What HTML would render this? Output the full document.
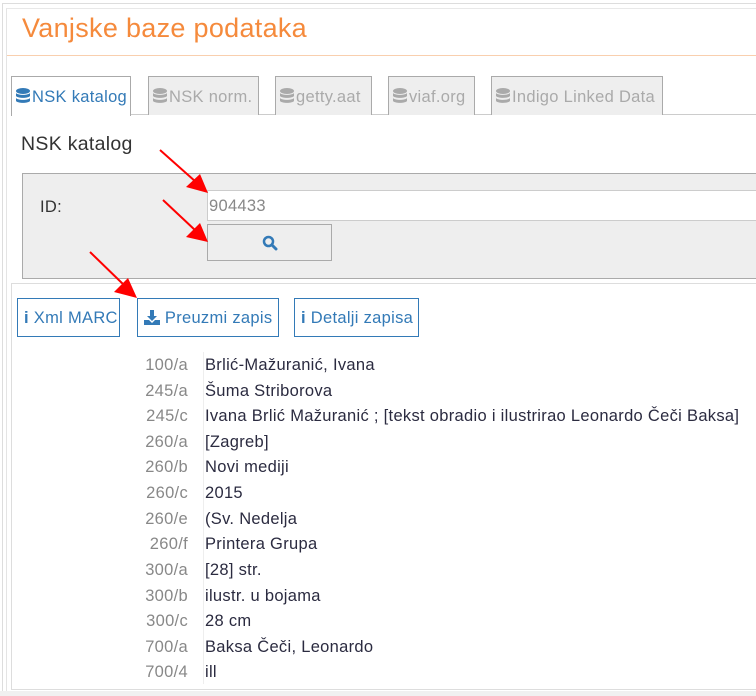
<!DOCTYPE html>
<html style="overflow:hidden;width:756px;height:696px"><head><meta charset="utf-8"><style>
*{box-sizing:border-box;margin:0;padding:0}
body{width:756px;height:696px;background:#fff;font-family:"Liberation Sans",sans-serif;position:relative;overflow:hidden;letter-spacing:.3px}
.a{position:absolute}
.tab{position:absolute;top:76px;height:39px;border:1px solid #aaa;border-bottom:none;background:#eee;color:#aaa;font-size:16.5px;line-height:40px;padding-left:4px;white-space:nowrap}
.tab svg{vertical-align:-2px;margin-right:1px}
.tab.act{background:#fff;color:#337ab7;height:40px}
.btn{position:absolute;top:298px;height:39px;border:1px solid #337ab7;color:#337ab7;font-size:16.5px;line-height:39px;padding-left:6px;white-space:nowrap}
.row{position:absolute;left:130px;height:25px;font-size:16.5px;line-height:25px;white-space:nowrap}
.row .l{display:inline-block;width:58px;text-align:right;color:#888}
.row .v{position:absolute;left:75px;color:#2b2b40}
</style></head><body>
<div class="a" style="left:2px;top:3px;width:754px;height:693px;border-left:1px solid #ddd;border-top:1px solid #ddd"></div>
<div class="a" style="left:6px;top:8px;width:750px;height:688px;border-left:1px solid #e4e4e4;border-top:1px solid #e8e8e8"></div>
<div class="a" style="left:22px;top:13px;font-size:27px;color:#f58a3c">Vanjske baze podataka</div>
<div class="a" style="left:7px;top:55px;width:749px;height:1px;background:#f9cfae"></div>
<div class="a" style="left:11px;top:114px;width:745px;height:1px;background:#ccc"></div>
<svg width="0" height="0" style="position:absolute"><defs><g id="db"><ellipse cx="7" cy="3" rx="7" ry="3"/><path d="M0 5c2 2.5 12 2.5 14 0v3c-2 2.5-12 2.5-14 0z"/><path d="M0 10c2 2.5 12 2.5 14 0v3c-2 2.5-12 2.5-14 0z"/></g></defs></svg>
<div class="tab act" style="left:11px;width:120px"><svg width="15" height="16" fill="#337ab7"><use href="#db"/></svg>NSK katalog</div>
<div class="tab" style="left:148px;width:111px"><svg width="15" height="16" fill="#aaa"><use href="#db"/></svg>NSK norm.</div>
<div class="tab" style="left:275px;width:97px"><svg width="15" height="16" fill="#aaa"><use href="#db"/></svg>getty.aat</div>
<div class="tab" style="left:388px;width:87px"><svg width="15" height="16" fill="#aaa"><use href="#db"/></svg>viaf.org</div>
<div class="tab" style="left:491px;width:172px"><svg width="15" height="16" fill="#aaa"><use href="#db"/></svg>Indigo Linked Data</div>
<div class="a" style="left:21px;top:133px;font-size:19.5px;color:#333">NSK katalog</div>
<div class="a" style="left:22px;top:173px;width:740px;height:106px;background:#eee;border:1px solid #aaa"></div>
<div class="a" style="left:40px;top:198px;font-size:16.5px;color:#333">ID:</div>
<div class="a" style="left:207px;top:190px;width:560px;height:31px;background:#fff;border:1px solid #ccc;font-size:16.5px;color:#888;line-height:31px;padding-left:1px">904433</div>
<div class="a" style="left:207px;top:224px;width:125px;height:37px;border:1px solid #aaa;background:#eee"><svg class="a" style="left:54px;top:10px" width="16" height="16" viewBox="0 0 16 16"><circle cx="6.5" cy="6.5" r="4.5" fill="none" stroke="#337ab7" stroke-width="2.5"/><path d="M10 10l4 4" stroke="#337ab7" stroke-width="3" stroke-linecap="round"/></svg></div>
<div class="a" style="left:11px;top:283px;width:760px;height:407px;border:1px solid #ddd"></div>
<div class="a" style="left:0;top:691px;width:756px;height:5px;background:#f0f0f0"></div>
<div class="btn" style="left:17px;width:103px"><b>i</b> Xml MARC</div>
<div class="btn" style="left:137px;width:142px"><svg width="16" height="15" viewBox="0 0 16 15" style="vertical-align:-2px"><path d="M6 0h4v6h3l-5 5-5-5h3z" fill="#337ab7"/><path d="M0 10h5l3 3 3-3h5v5H0z" fill="#337ab7"/></svg> Preuzmi zapis</div>
<div class="btn" style="left:294px;width:125px"><b>i</b> Detalji zapisa</div>
<div class="a" style="left:203px;top:352px;width:1px;height:332px;background:#eee"></div>
<div class="row" style="top:353px"><span class="l">100/a</span><span class="v">Brlić-Mažuranić, Ivana</span></div>
<div class="row" style="top:379px"><span class="l">245/a</span><span class="v">Šuma Striborova</span></div>
<div class="row" style="top:404px"><span class="l">245/c</span><span class="v">Ivana Brlić Mažuranić ; [tekst obradio i ilustrirao Leonardo Čeči Baksa]</span></div>
<div class="row" style="top:430px"><span class="l">260/a</span><span class="v">[Zagreb]</span></div>
<div class="row" style="top:455px"><span class="l">260/b</span><span class="v">Novi mediji</span></div>
<div class="row" style="top:481px"><span class="l">260/c</span><span class="v">2015</span></div>
<div class="row" style="top:507px"><span class="l">260/e</span><span class="v">(Sv. Nedelja</span></div>
<div class="row" style="top:532px"><span class="l">260/f</span><span class="v">Printera Grupa</span></div>
<div class="row" style="top:558px"><span class="l">300/a</span><span class="v">[28] str.</span></div>
<div class="row" style="top:584px"><span class="l">300/b</span><span class="v">ilustr. u bojama</span></div>
<div class="row" style="top:609px"><span class="l">300/c</span><span class="v">28 cm</span></div>
<div class="row" style="top:635px"><span class="l">700/a</span><span class="v">Baksa Čeči, Leonardo</span></div>
<div class="row" style="top:660px"><span class="l">700/4</span><span class="v">ill</span></div>
<svg class="a" style="left:0;top:0" width="756" height="696">
<g stroke="#f00" stroke-width="2"><line x1="160" y1="150" x2="196" y2="182"/><line x1="163" y1="200" x2="196" y2="231"/><line x1="90" y1="252" x2="125" y2="286"/></g>
<g fill="#f00"><polygon points="208,193 186,187 200,174"/><polygon points="208,242 186,237 200,223"/><polygon points="137,298 114,292 128,278"/></g>
</svg>
</body></html>
